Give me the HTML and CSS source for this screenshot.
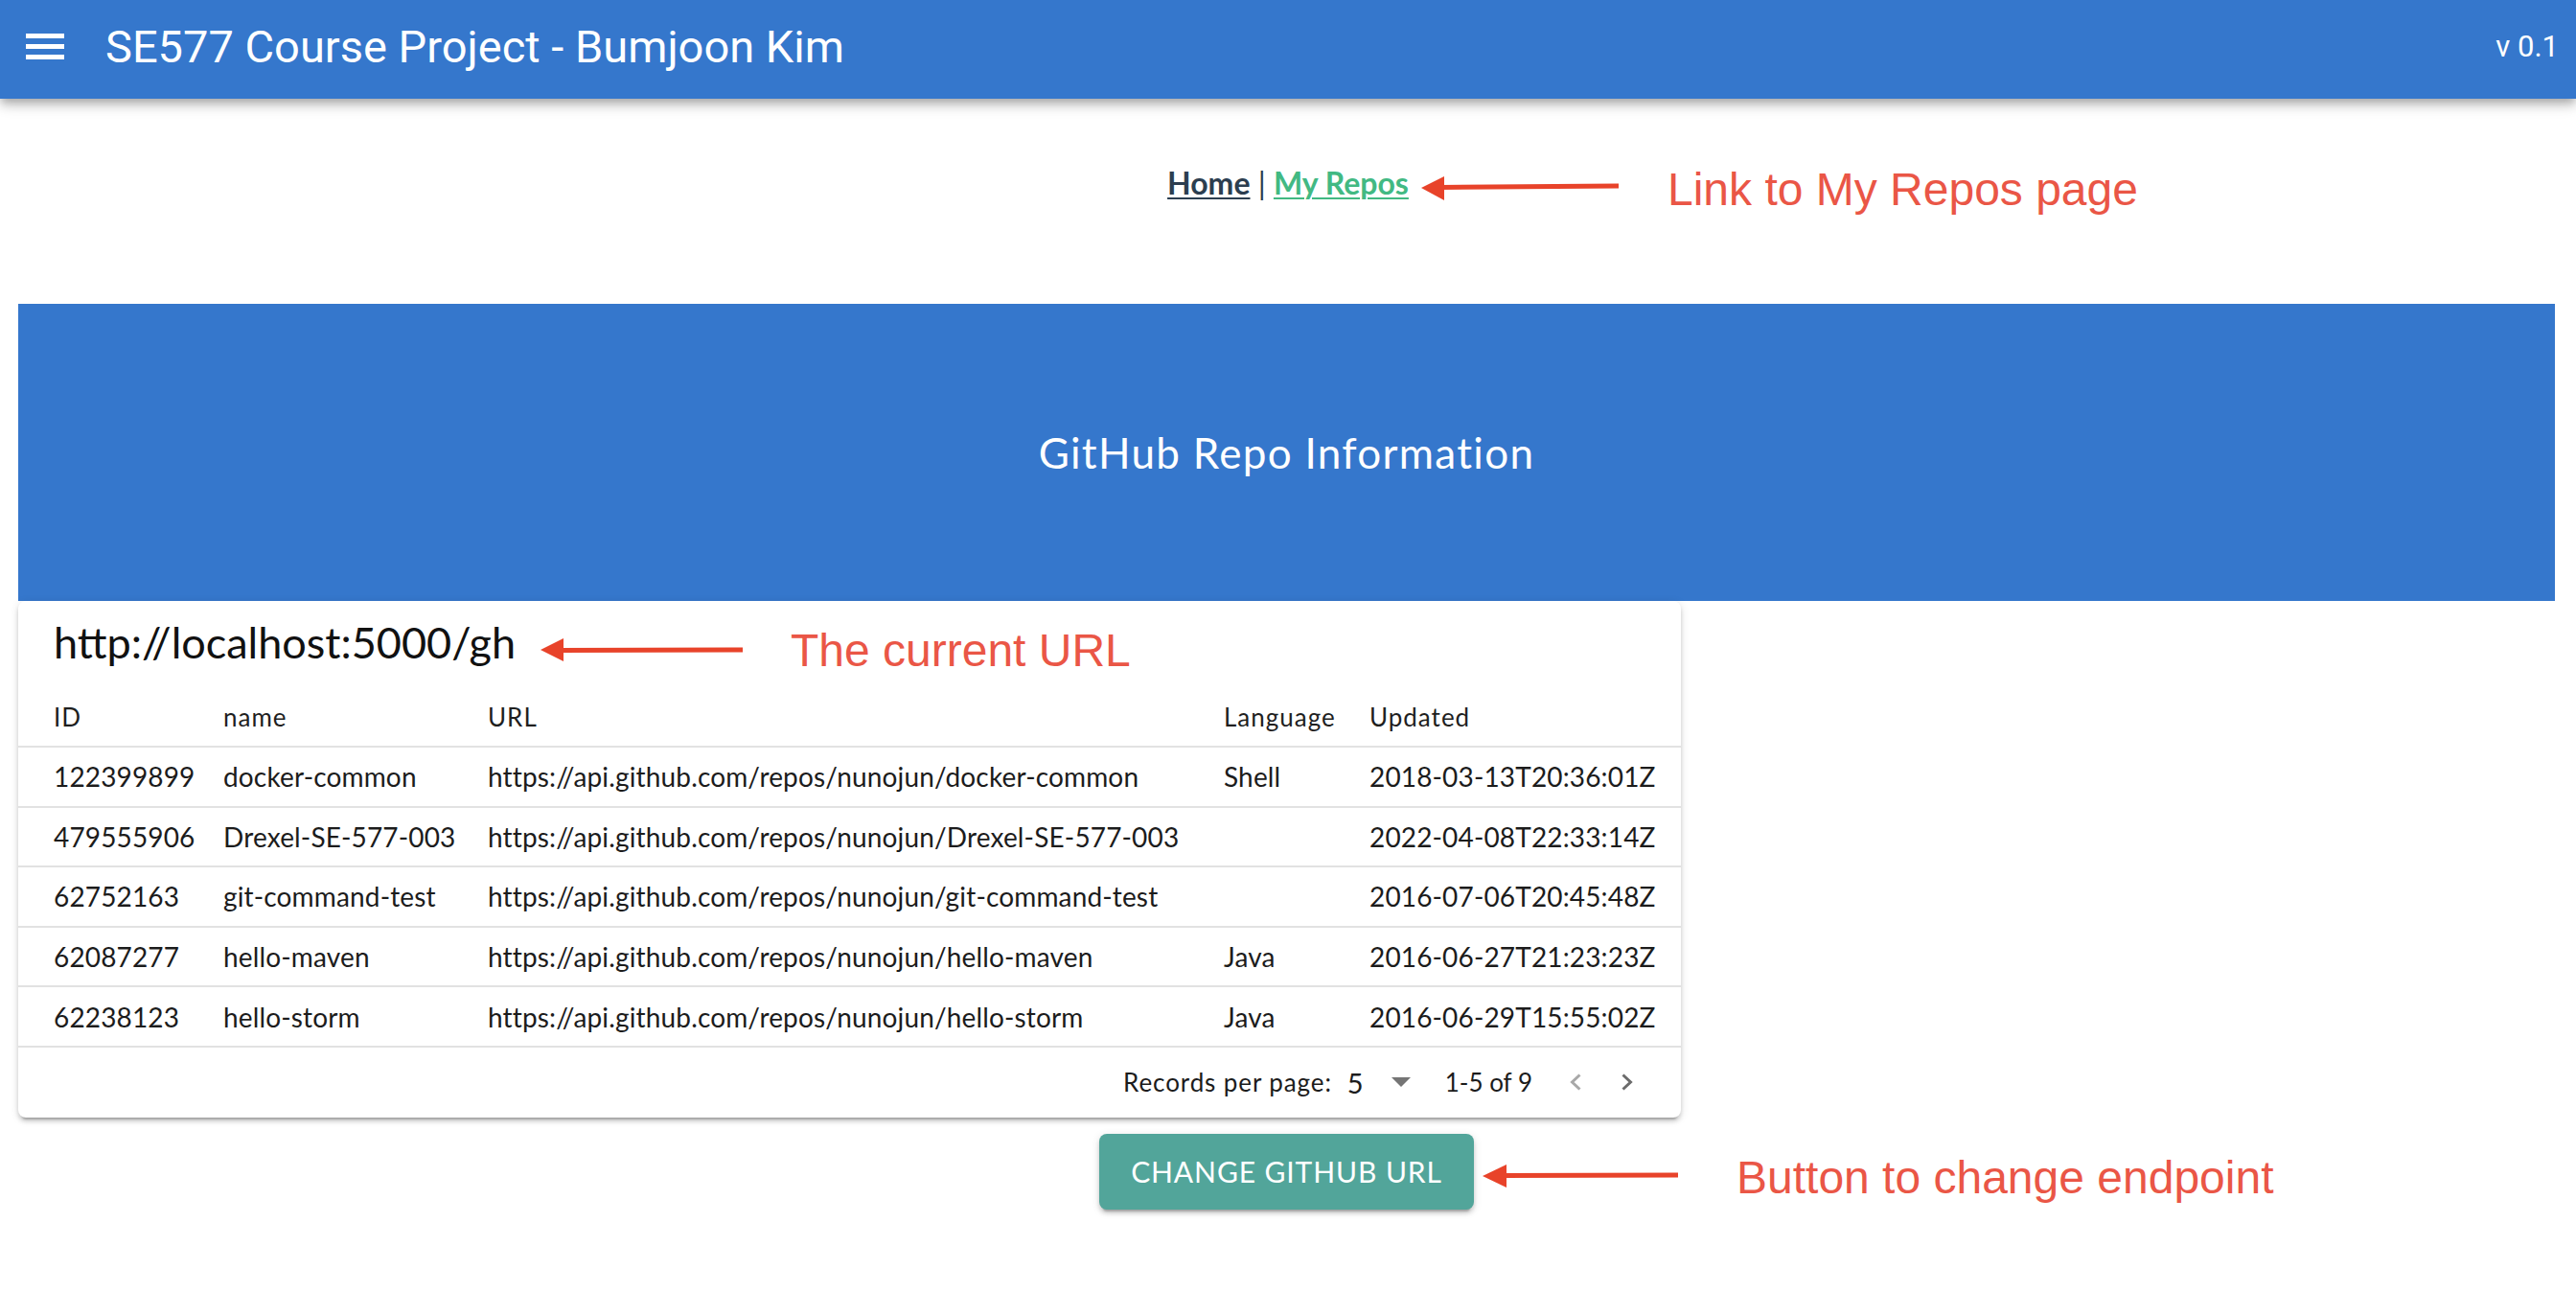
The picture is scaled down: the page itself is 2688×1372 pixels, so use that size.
FILE: index.html
```html
<!DOCTYPE html>
<html lang="en">
<head>
<meta charset="utf-8">
<title>SE577 Course Project - Bumjoon Kim</title>
<link rel="stylesheet" href="styles.css">
</head>
<body>
<header class="appbar">
  <svg class="menu" width="40" height="27" viewBox="0 0 40 27" aria-hidden="true">
    <rect x="0" y="0" width="40" height="5"/>
    <rect x="0" y="11" width="40" height="5"/>
    <rect x="0" y="22" width="40" height="5"/>
  </svg>
  <div class="app-title">SE577 Course Project - Bumjoon Kim</div>
  <div class="version">v 0.1</div>
</header>

<nav class="nav">
  <a class="nav-link" href="#">Home</a> | <a class="nav-link active" href="#">My Repos</a>
</nav>

<main class="content">
  <section class="banner">GitHub Repo Information</section>

  <div class="card">
    <div class="card-title">http://localhost:5000/gh</div>
    <table class="grid">
      <thead>
        <tr>
          <th class="c-id">ID</th>
          <th class="c-name">name</th>
          <th class="c-url">URL</th>
          <th class="c-lang">Language</th>
          <th class="c-upd">Updated</th>
        </tr>
      </thead>
      <tbody>
        <tr><td>122399899</td><td>docker-common</td><td>https://api.github.com/repos/nunojun/docker-common</td><td>Shell</td><td>2018-03-13T20:36:01Z</td></tr>
        <tr><td>479555906</td><td>Drexel-SE-577-003</td><td>https://api.github.com/repos/nunojun/Drexel-SE-577-003</td><td></td><td>2022-04-08T22:33:14Z</td></tr>
        <tr><td>62752163</td><td>git-command-test</td><td>https://api.github.com/repos/nunojun/git-command-test</td><td></td><td>2016-07-06T20:45:48Z</td></tr>
        <tr><td>62087277</td><td>hello-maven</td><td>https://api.github.com/repos/nunojun/hello-maven</td><td>Java</td><td>2016-06-27T21:23:23Z</td></tr>
        <tr><td>62238123</td><td>hello-storm</td><td>https://api.github.com/repos/nunojun/hello-storm</td><td>Java</td><td>2016-06-29T15:55:02Z</td></tr>
      </tbody>
    </table>
    <div class="pager">
      <span class="rpp">Records per page:</span>
      <span class="rpp-value">5</span>
      <svg class="caret" width="20" height="10" viewBox="0 0 20 10" aria-hidden="true"><polygon points="0,0 20,0 10,10"/></svg>
      <span class="range">1-5 of 9</span>
      <svg class="chev chev-prev" width="12" height="18" viewBox="0 0 12 18" aria-hidden="true"><polyline points="10.5,1.5 2.5,9 10.5,16.5"/></svg>
      <svg class="chev chev-next" width="12" height="18" viewBox="0 0 12 18" aria-hidden="true"><polyline points="1.5,1.5 9.5,9 1.5,16.5"/></svg>
    </div>
  </div>

  <div class="actions">
    <button class="btn" type="button">Change GitHub URL</button>
  </div>
</main>

<div class="annotations">
  <svg class="arrows" width="2688" height="1372" viewBox="0 0 2688 1372" aria-hidden="true">
    <line x1="1503" y1="195.5" x2="1689" y2="194" />
    <polygon points="1483,196 1507,184 1507,209" />
    <line x1="584" y1="678.5" x2="775" y2="678" />
    <polygon points="564,678 588,666 588,690" />
    <line x1="1568" y1="1226.5" x2="1751" y2="1226" />
    <polygon points="1547,1227 1572,1215 1572,1239" />
  </svg>
  <div class="note note-links">Link to My Repos page</div>
  <div class="note note-url">The current URL</div>
  <div class="note note-btn">Button to change endpoint</div>
</div>
</body>
</html>
```

FILE: styles.css
```css
html, body {
  margin: 0;
  padding: 0;
  background: #ffffff;
}

body {
  position: relative;
  min-height: 1372px;
  font-family: Lato, "Open Sans", sans-serif;
}

/* ---------- App bar ---------- */
.appbar {
  position: relative;
  z-index: 2;
  height: 103px;
  box-sizing: border-box;
  padding: 0 18px 7px 27px;
  display: flex;
  align-items: center;
  background: #3577cc;
  color: #ffffff;
  font-family: Roboto, "Liberation Sans", sans-serif;
  box-shadow: 0 4px 8px -2px rgba(0, 0, 0, 0.2), 0 8px 10px 0 rgba(0, 0, 0, 0.14), 0 2px 20px 0 rgba(0, 0, 0, 0.12);
}

.menu {
  fill: #ffffff;
  flex: none;
}

.app-title {
  margin-left: 43px;
  font-size: 47px;
  white-space: nowrap;
}

.version {
  margin-left: auto;
  font-size: 31px;
}

/* ---------- Nav ---------- */
.nav {
  padding: 68px 0 106px;
  line-height: 40px;
  text-align: center;
  font-size: 32px;
  color: #2c3e50;
}

.nav-link {
  font-weight: bold;
  color: #2c3e50;
  text-decoration: underline;
  text-decoration-thickness: 2px;
  text-underline-offset: 3px;
}

.nav-link.active {
  color: #42b983;
}

/* ---------- Content ---------- */
.content {
  margin-left: 19px;
  width: 2647px;
}

.banner {
  height: 310px;
  display: flex;
  align-items: center;
  justify-content: center;
  background: #3577cc;
  color: #ffffff;
  font-size: 44px;
  letter-spacing: 1.3px;
}

.card {
  width: 1735px;
  background: #ffffff;
  border-radius: 8px;
  box-shadow: 0 6px 2px -4px rgba(0, 0, 0, 0.2), 0 4px 4px 0 rgba(0, 0, 0, 0.14), 0 2px 10px 0 rgba(0, 0, 0, 0.12);
  color: rgba(0, 0, 0, 0.87);
}

.card-title {
  padding: 13px 0 17px 37px;
  line-height: 60px;
  font-size: 45px;
  color: #111111;
}

.grid {
  width: 100%;
  table-layout: fixed;
  border-collapse: separate;
  border-spacing: 0;
}

.grid th,
.grid td {
  box-sizing: border-box;
  padding: 0 18px;
  text-align: left;
  white-space: nowrap;
  overflow: hidden;
  border-bottom: 2px solid #e2e2e2;
}

.grid th {
  height: 63px;
  font-size: 26px;
  letter-spacing: 1px;
  font-weight: normal;
  color: #1f1f1f;
}

.grid td {
  height: 62.6px;
  font-size: 28px;
  letter-spacing: 0.15px;
  color: #1c1c1c;
}

.grid th:first-child,
.grid td:first-child {
  padding-left: 37px;
}

.grid th:last-child,
.grid td:last-child {
  padding-right: 35px;
}

.c-id { width: 196px; }
.c-name { width: 276px; }
.c-url { width: 768px; }
.c-lang { width: 152px; }
.c-upd { width: 343px; }

/* ---------- Pager ---------- */
.pager {
  height: 73px;
  display: flex;
  align-items: center;
  justify-content: flex-end;
  padding-right: 50px;
  font-size: 26px;
  color: #1c1c1c;
}

.rpp {
  margin-right: 16px;
  letter-spacing: 0.9px;
}

.rpp-value {
  margin-right: 29px;
  font-size: 29px;
}

.caret {
  fill: #757575;
  margin-right: 36px;
}

.range {
  margin-right: 39px;
  font-size: 26px;
}

.chev {
  fill: none;
  stroke-width: 3;
  stroke-linecap: butt;
  stroke-linejoin: miter;
}

.chev-prev {
  stroke: #a8a8a8;
  margin-right: 42px;
}

.chev-next {
  stroke: #6b6b6b;
}

/* ---------- Action ---------- */
.actions {
  padding-top: 17px;
  text-align: center;
}

.btn {
  width: 391px;
  height: 79px;
  padding: 0;
  border: none;
  border-radius: 8px;
  background: #52a59a;
  color: #ffffff;
  font-family: Lato, "Open Sans", sans-serif;
  font-size: 30px;
  font-weight: normal;
  letter-spacing: 0.9px;
  text-transform: uppercase;
  box-shadow: 0 6px 2px -4px rgba(0, 0, 0, 0.2), 0 4px 4px 0 rgba(0, 0, 0, 0.14), 0 2px 10px 0 rgba(0, 0, 0, 0.12);
}

/* ---------- Annotations (overlay) ---------- */
.annotations {
  position: absolute;
  left: 0;
  top: 0;
  width: 2688px;
  height: 1372px;
  pointer-events: none;
  z-index: 3;
}

.arrows {
  position: absolute;
  left: 0;
  top: 0;
}

.arrows line {
  stroke: #e8432a;
  stroke-width: 5;
}

.arrows polygon {
  fill: #e8432a;
}

.note {
  position: absolute;
  font-family: "Liberation Sans", Arial, sans-serif;
  font-size: 48px;
  line-height: 1;
  color: #ea5646;
  white-space: nowrap;
}

.note-links {
  left: 1740px;
  top: 174px;
}

.note-url {
  left: 825px;
  top: 655px;
}

.note-btn {
  left: 1812px;
  top: 1205px;
}
```
